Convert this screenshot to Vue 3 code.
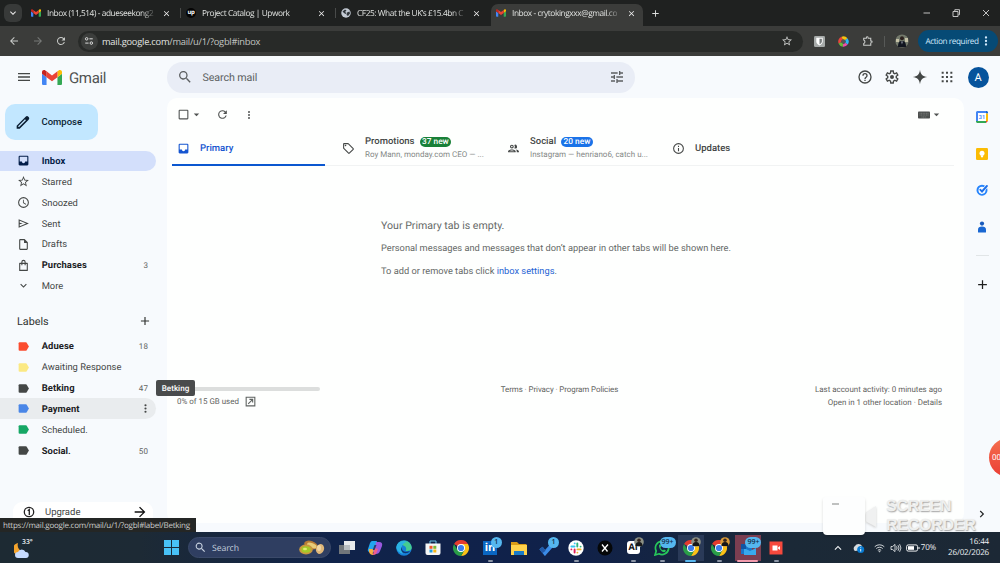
<template>
  <div class="screen">
    <!-- shared logos -->
    <svg class="defs" aria-hidden="true">
      <symbol id="gmail" viewBox="52 42 88 66">
        <path fill="#4285f4" d="M58 108h14V74L52 59v43c0 3.32 2.69 6 6 6" />
        <path fill="#34a853" d="M120 108h14c3.32 0 6-2.69 6-6V59l-20 15" />
        <path fill="#fbbc04" d="M120 48v26l20-15v-8c0-7.42-8.47-11.65-14.4-7.2" />
        <path fill="#ea4335" d="M72 74V48l24 18 24-18v26L96 92" />
        <path fill="#c5221f" d="M52 51v8l20 15V48l-5.6-4.2c-5.94-4.45-14.4-.22-14.4 7.2" />
      </symbol>
      <symbol id="chrome" viewBox="0 0 48 48">
        <path fill="#e33b2e" d="M24 24 3.2 12A24 24 0 0 1 44.8 12H24z" />
        <path fill="#fbc116" d="M24 12h20.8A24 24 0 0 1 24 48l10.4-18z" />
        <path fill="#2a9d48" d="M3.2 12A24 24 0 0 0 24 48l10.4-18L24 34 13.6 30z" />
        <circle cx="24" cy="24" r="12" fill="#fff" />
        <circle cx="24" cy="24" r="9.3" fill="#3b7ded" />
      </symbol>
    </svg>

    <header class="tabstrip">
      <button class="tab-search"><Glyph name="chevronDown" :size="12" /></button>
      <div v-for="tab in browserTabs" :key="tab.title" class="tab" :class="[tab.kind, { active: tab.active }]">
        <svg v-if="tab.icon === 'gmail'" class="favicon gm"><use href="#gmail" /></svg>
        <span v-else-if="tab.icon === 'up'" class="favicon up">up</span>
        <svg v-else class="favicon" viewBox="0 0 20 20">
          <circle cx="10" cy="10" r="9.5" fill="#c3cad3" />
          <path fill="#30363a" d="M3 7 8 3l3 2-3 3 3 2-2 2-3-2zM12 9l5-2 1 4-4 5-3-2z" />
        </svg>
        <span class="tab-title">{{ tab.title }}</span>
        <Glyph name="close" :size="9" class="tab-close" />
      </div>
      <Glyph name="plus" :size="11" class="new-tab" />
      <div class="window-buttons">
        <svg viewBox="0 0 10 10"><path d="M1.5 5h6.500" /></svg>
        <svg viewBox="0 0 10 10"><path d="M2 3.500h5v5H2zM3.800 3V1.700h4.700v5H7.400" /></svg>
        <svg viewBox="0 0 10 10"><path d="m2 2 6 6M8 2 2 8" /></svg>
      </div>
    </header>

    <div class="toolbar">
      <Glyph name="back" :size="12" />
      <Glyph name="forward" :size="12" class="dim" />
      <Glyph name="reload" :size="12" />
      <div class="address">
        <span class="site-info">
          <svg viewBox="0 0 12 12"><circle cx="3.2" cy="3.4" r="1.5" /><path d="M6.5 3.4h4M1.5 8.5h4" /><circle cx="8.8" cy="8.5" r="1.5" /></svg>
        </span>
        <span class="url">mail.google.com<i>/mail/u/1/?ogbl#inbox</i></span>
        <Glyph name="star" :size="12" />
      </div>
      <div class="extensions">
        <svg viewBox="0 0 12 12"><rect width="12" height="12" rx="1.5" fill="#a6aaa9" /><path fill="#fff" d="M2.500 2h7v4c0 2-1.500 3.300-3.500 4.300C4 9.300 2.500 8 2.500 6z" /><path fill="#777c7c" d="M6 3h2.600v3c0 1.300-1 2.300-2.600 3z" /></svg>
        <svg viewBox="0 0 12 12" class="wheel"><g fill="none" stroke-width="3.400"><path stroke="#e8453c" d="M2.200 7.500A4 4 0 0 1 4.500 2.300" /><path stroke="#f4c20d" d="M4.500 2.300A4 4 0 0 1 9 3.500" /><path stroke="#29b6f6" d="M9 3.500A4 4 0 0 1 9.200 8.400" /><path stroke="#ec4fa5" d="M9.200 8.400A4 4 0 0 1 5.400 10" /><path stroke="#66bb3a" d="M5.400 10A4 4 0 0 1 2.200 7.500" /></g><circle cx="6" cy="6" r="2.300" fill="#555" /></svg>
        <Glyph name="puzzle" :size="13" />
      </div>
      <span class="bar-divider"></span>
      <svg class="profile" viewBox="0 0 14 14"><circle cx="7" cy="7" r="6.600" fill="#73796b" /><path fill="#c5c1a6" d="M1 5h3v3H1zm9-1h3v4h-3z" /><circle cx="7" cy="4.300" r="2" fill="#2c211e" /><path fill="#11151f" d="M3 13c0-5 1.500-6 4-6s4 1 4 6z" /><path fill="#d6dbe6" d="m6.400 7.500.6 3 .6-3z" /></svg>
      <div class="action"><span>Action required</span><Glyph name="dots" :size="14" /></div>
    </div>

    <div class="gmail">
      <div class="topbar">
        <Glyph name="menu" :size="16" class="burger" />
        <svg class="logo"><use href="#gmail" /></svg>
        <span class="wordmark">Gmail</span>
        <div class="search">
          <Glyph name="search" :size="16" />
          <span>Search mail</span>
          <Glyph name="tune" :size="16" />
        </div>
        <div class="top-actions">
          <Glyph name="help" :size="16" />
          <Glyph name="settings" :size="16" />
          <Glyph name="spark" :size="16" />
          <Glyph name="apps" :size="16" />
          <span class="account">A</span>
        </div>
      </div>

      <aside class="sidebar">
        <button class="compose"><Glyph name="pencil" :size="16" /><span>Compose</span></button>
        <ul class="nav">
          <li v-for="item in folders" :key="item.name" :class="{ current: item.current, bold: item.bold }">
            <Glyph :name="item.icon" :size="13" />
            <span>{{ item.name }}</span>
            <em v-if="item.count">{{ item.count }}</em>
          </li>
        </ul>
        <div class="labels-head"><span>Labels</span><Glyph name="plus" :size="14" /></div>
        <ul class="nav">
          <li v-for="label in labels" :key="label.name" :class="{ bold: label.bold, hovered: label.hovered }">
            <Glyph name="label" :size="13" :style="{ color: label.color }" />
            <span>{{ label.name }}</span>
            <em v-if="label.count">{{ label.count }}</em>
            <Glyph v-if="label.hovered" name="dots" :size="13" class="row-menu" />
          </li>
        </ul>
        <div class="upgrade">
          <svg class="one" viewBox="0 0 12 12"><circle cx="6" cy="6" r="4.700" /><path d="M4.700 4.700 6.300 3.600V9" /></svg>
          <span>Upgrade</span>
          <Glyph name="forward" :size="16" />
        </div>
      </aside>

      <main class="panel">
        <div class="list-tools">
          <Glyph name="box" :size="13" />
          <Glyph name="caret" :size="13" class="select-caret" />
          <Glyph name="reload" :size="13" class="refresh" />
          <Glyph name="dots" :size="12" />
          <svg class="keyboard" viewBox="0 0 12 8"><rect y=".5" width="12" height="7" rx=".8" /><path d="M1.500 2.300h9M1.500 4h9M3.500 6h5" /></svg>
          <Glyph name="caret" :size="13" />
        </div>
        <div class="categories">
          <div v-for="cat in categories" :key="cat.name" class="category" :class="{ selected: cat.selected }">
            <Glyph :name="cat.icon" :size="13" />
            <div class="cat-text">
              <div class="cat-name">{{ cat.name }}<b v-if="cat.badge" :class="cat.tone">{{ cat.badge }}</b></div>
              <div v-if="cat.preview" class="preview">{{ cat.preview }}</div>
            </div>
          </div>
        </div>
        <div class="empty">
          <p class="lead">Your Primary tab is empty.</p>
          <p>Personal messages and messages that don’t appear in other tabs will be shown here.</p>
          <p class="hint">To add or remove tabs click <a>inbox settings</a>.</p>
        </div>
        <footer class="foot">
          <div class="storage">
            <div class="meter"></div>
            <div class="used"><span>0% of 15 GB used</span><Glyph name="open" :size="13" /></div>
          </div>
          <div class="terms">Terms · Privacy · Program Policies</div>
          <div class="activity">
            <div>Last account activity: 0 minutes ago</div>
            <div class="location">Open in 1 other location · Details</div>
          </div>
        </footer>
      </main>

      <aside class="rail">
        <svg viewBox="0 0 12 12"><path fill="#4285f4" d="M1 0h9v2H2v8H0V1z" /><path fill="#1967d2" d="M10 0h1l1 1v1.500h-2z" /><path fill="#fbbc04" d="M10 2.500h2V10h-2z" /><path fill="#34a853" d="M2 10h8v2H1l-1-1v-1z" /><path fill="#ea4335" d="M10 10h2l-2 2z" /><path fill="#fff" d="M2 2h8v8H2z" /><text x="6" y="8.200" text-anchor="middle">31</text></svg>
        <svg viewBox="0 0 12 12"><rect width="12" height="12" rx="1.200" fill="#fbbc04" /><circle cx="6" cy="5.200" r="2.500" fill="#fff" /><path fill="#fff" d="M4.900 7.300h2.200v2H4.900z" /></svg>
        <svg viewBox="0 0 12 12"><circle cx="6" cy="6.200" r="4.500" fill="none" stroke="#2684fc" stroke-width="2" /><path d="m3.800 5.600 2 2.200 4.800-5.600" fill="none" stroke="#fff" stroke-width="3.200" /><path d="m4.400 5.800 1.600 1.700 4.900-5.500" fill="none" stroke="#1e70ea" stroke-width="1.900" stroke-linecap="round" /></svg>
        <svg viewBox="0 0 12 12"><circle cx="6" cy="2.600" r="2.100" fill="#185abc" /><path fill="#1967d2" d="M2 11V8.500C2 6.500 3.500 5.500 6 5.500s4 1 4 3V11q0 .5-.5.500h-7Q2 11.500 2 11z" /></svg>
        <hr />
        <Glyph name="plus" :size="15" class="add" />
        <Glyph name="chevronRight" :size="14" class="collapse" />
      </aside>

      <div class="tip">Betking</div>
      <div class="status">https://mail.google.com/mail/u/1/?ogbl#label/Betking</div>
      <div class="recorder-name">SCREEN<br />RECORDER</div>
      <svg class="recorder-lens" viewBox="0 0 12 24"><path d="M0 7 11 0v23L0 17z" /></svg>
      <div class="recorder-timer">00</div>
    </div>

    <footer class="taskbar">
      <div class="weather">
        <svg viewBox="0 0 16 15"><path fill="#f5a42d" d="M4 0a6 6 0 1 0 6 9A7 7 0 0 1 4 0z" /><path fill="#c7dbff" d="M4 15a3 3 0 0 1 0-6 4 4 0 0 1 7.500 0A3 3 0 0 1 12 15z" /></svg>
        <span>33°</span>
      </div>
      <div class="start"><i></i><i></i><i></i><i></i></div>
      <div class="task-search">
        <Glyph name="search" :size="13" />
        <span>Search</span>
        <svg class="pistachio" viewBox="0 0 26 15"><ellipse cx="12" cy="5" rx="7" ry="4" fill="#b97c35" transform="rotate(20 12 5)" /><ellipse cx="13" cy="5.500" rx="5" ry="2.400" fill="#e8cc79" transform="rotate(20 13 5)" /><ellipse cx="7" cy="9.500" rx="6.800" ry="5" fill="#c9973f" /><ellipse cx="7" cy="9.500" rx="4.700" ry="3.300" fill="#a4c928" /><ellipse cx="6" cy="9" rx="2" ry="1.300" fill="#e1ed72" /><ellipse cx="21" cy="9" rx="4" ry="5" fill="#e0b779" transform="rotate(20 21 9)" /><ellipse cx="20" cy="8" rx="2" ry="3" fill="#f0d6a5" /></svg>
      </div>
      <div class="apps">
        <div class="app"><svg viewBox="0 0 16 16"><path fill="#71767a" d="M0 5h11v9H0z" /><path fill="#e8eaeb" d="M5 1h11v9H5z" /><path fill="#b8bdc0" d="M5 5h6v5H5z" /></svg></div>
        <div class="app"><svg viewBox="0 0 16 16"><path fill="#22a6ee" d="M5 1h5L7 12H3Q0 12 1 9l2-6Q4 1 5 1z" /><path fill="#9958df" d="M9 2h3q4 0 3 4l-2 5q-1 3-4 3H7z" /><path fill="#f5ad43" d="M2 9h5l-1 3Q5 15 8 15H6Q3 15 2 12z" /><path fill="#ef5e8a" d="m7 8 4 1-2 5q-1 1-3 1z" /><path fill="#273e70" d="m7.500 5 2 0-2 5H5.700z" /></svg></div>
        <div class="app"><svg viewBox="0 0 16 16"><circle cx="8" cy="8" r="7.700" fill="#1681d8" /><path fill="#45cc91" d="M1 5C4-1 14-1 15.700 7c.3 3-2 4-6 4 2-4-2-7-8.700-6z" /><path fill="#2ab2e6" d="M1 5C3 1 8 0 11 2 6 3 4 8 7 14 1 12-1 8 1 5z" /><path fill="#0f3672" d="M6 7c-1 4 3 6 8 4-2 3-7 3-8.500 0C4.700 9 5 8 6 7z" /></svg></div>
        <div class="app"><svg viewBox="0 0 16 16"><path fill="none" stroke="#6cc3e6" d="M5 4V1h6v3" /><path fill="#f4f6f7" d="M.5 3.500h15V13q0 2-2 2h-11q-2 0-2-2z" /><path fill="#ef5228" d="M4.500 5.800h3v3h-3z" /><path fill="#7ab832" d="M8.300 5.800h3v3h-3z" /><path fill="#209fe0" d="M4.500 9.500h3v3h-3z" /><path fill="#f7b718" d="M8.300 9.500h3v3h-3z" /></svg></div>
        <div class="app"><svg><use href="#chrome" /></svg></div>
        <div class="app running"><span class="linkedin">in</span><b class="dot">1</b></div>
        <div class="app"><svg viewBox="0 0 16 16"><path fill="#d99b16" d="M0 2h6l2 2h7.500v10H0z" /><path fill="#ffd24b" d="M0 5h16v10H0z" /><path fill="#1a7bc8" d="M3 11h10v4H3z" /></svg></div>
        <div class="app"><svg viewBox="0 0 16 16"><path d="m2 8 4 5L14 4" fill="none" stroke="#3c8ce8" stroke-width="4" /><path d="m2 8 3 4" stroke="#2259a9" stroke-width="4" /></svg><b class="dot">1</b></div>
        <div class="app running"><svg viewBox="0 0 16 16"><circle cx="8" cy="8" r="7.700" fill="#fff" /><g fill="none" stroke-width="1.900" stroke-linecap="round"><path stroke="#36c5f0" d="M6.700 3.400v0M3.400 6.500h3.200" /><path stroke="#2eb67d" d="M9.300 3.400v3.200M12.600 6.600v0" /><path stroke="#ecb22e" d="M9.400 9.400h3.200M9.400 12.600v0" /><path stroke="#e01e5a" d="M6.600 9.400v3.200M3.400 9.400v0" /></g></svg></div>
        <div class="app"><svg viewBox="0 0 16 16"><circle cx="8" cy="8" r="7.500" fill="#050708" /><path d="m5 4.500 5.500 7M11 4.500l-6 7" stroke="#fff" stroke-width="1.300" /></svg></div>
        <div class="app running"><span class="ai">AI</span><Face /></div>
        <div class="app running"><svg viewBox="0 0 16 16"><path d="M1 15 2.200 11A6.600 6.600 0 1 1 5 13.800z" fill="none" stroke="#27c65b" stroke-width="1.700" /><path fill="#27c65b" d="M5.200 4.500 7 5v2l-.7.700q1 2 2.700 2.500l1-.7 2 1-1 1.500C8 13 4 8 5.200 4.500z" /></svg><b class="many">99+</b></div>
        <div class="app running focused"><svg><use href="#chrome" /></svg><Face /></div>
        <div class="app running"><svg><use href="#chrome" /></svg><Face warm /></div>
        <div class="app running alert"><svg viewBox="0 0 16 16"><path fill="#1976c9" d="M1 4h11v10H1z" /><path fill="#38a9ec" d="m4 8 6 3 6-3v7H4z" /><path fill="#1055a4" d="M1 4h5v5H1z" /></svg><b class="many">99+</b></div>
        <div class="app running"><svg viewBox="0 0 16 16"><rect x="1.500" y="1.500" width="13" height="13" fill="#f5493d" /><path fill="#fff" d="M4.500 5.500h5v5h-5zM10 7.500l2-1.500v4l-2-1.500z" /></svg></div>
      </div>
      <div class="tray">
        <Glyph name="chevronUp" :size="14" />
        <svg class="cloud" viewBox="0 0 13 12"><path fill="#d5dce1" d="M3 9a3 3 0 0 1 0-5 4 4 0 0 1 7 0v4z" /><circle cx="8.700" cy="7.500" r="3.500" fill="#087bd2" /><path stroke="#fff" stroke-width=".9" d="M8.700 5.300v.9M8.700 7v2.500" /></svg>
        <svg class="wifi" viewBox="0 0 12 10"><path d="M.8 3.600a7.500 7.500 0 0 1 10.400 0M2.500 5.600a5 5 0 0 1 7 0M4.200 7.500a2.600 2.600 0 0 1 3.600 0" /><circle cx="6" cy="8.700" r=".5" /></svg>
        <svg class="volume" viewBox="0 0 12 10"><path d="M1 3.500h1.600L5 1.400v7.200L2.600 6.500H1zM6.500 3.300q1.200 1.700 0 3.400M8 2.200q2 2.800 0 5.600M9.600 1.200q2.700 3.800 0 7.600" /></svg>
        <svg class="battery" viewBox="0 0 14 8"><rect x=".6" y=".9" width="11" height="6.200" rx="1.600" fill="none" stroke="#fff" stroke-width=".9" /><rect x="2" y="2.200" width="6" height="3.600" fill="#fff" /><path stroke="#fff" d="M13 3v2" /></svg>
        <span class="percent">70%</span>
        <div class="clock"><div>16:44</div><div>26/02/2026</div></div>
      </div>
      <div class="recorder-card"></div>
    </footer>
  </div>
</template>

<script setup>
import { h } from 'vue'

const paths = {
  chevronDown: 'M7.400 8.600 12 13.200l4.600-4.600L18 10l-6 6-6-6z',
  chevronUp: 'm12 8 6 6-1.400 1.400L12 10.800l-4.600 4.600L6 14z',
  chevronRight: 'M9.700 6 15.700 12l-6 6-1.500-1.500 4.500-4.500-4.500-4.500z',
  close: 'M19 6.400 17.600 5 12 10.600 6.400 5 5 6.400l5.600 5.600L5 17.600 6.400 19l5.600-5.600 5.600 5.600 1.400-1.400-5.600-5.600z',
  plus: 'M19 13h-6v6h-2v-6H5v-2h6V5h2v6h6z',
  back: 'M20 11H7.800l5.600-5.600L12 4l-8 8 8 8 1.400-1.400L7.800 13H20z',
  forward: 'm12 4-1.400 1.400 5.600 5.600H4v2h12.200l-5.600 5.600L12 20l8-8z',
  reload: 'M17.650 6.350A8 8 0 1 0 19.730 14h-2.080A6 6 0 1 1 12 6c1.660 0 3.140.69 4.220 1.780L13 11h7V4z',
  star: 'm22 9.240-7.190-.62L12 2 9.190 8.630 2 9.240l5.460 4.730L5.820 21 12 17.270 18.180 21l-1.630-7.030zM12 15.400l-3.760 2.270 1-4.280-3.320-2.880 4.380-.38L12 6.100l1.710 4.040 4.380.38-3.320 2.880 1 4.280z',
  puzzle: 'M4 5h5a2.500 2.500 0 0 1 5 0h5v5a2.500 2.500 0 0 1 0 5v5H4v-5c3 0 3-5 0-5zM6 7v1.700c3 1.500 3 6.100 0 7.600V18h11v-4h1.500a1 1 0 0 0 0-2H17V7h-4.500V5a.8.8 0 0 0-1.600 0v2z',
  dots: 'M12 8a2 2 0 1 0 0-4 2 2 0 0 0 0 4m0 2a2 2 0 1 0 0 4 2 2 0 0 0 0-4m0 6a2 2 0 1 0 0 4 2 2 0 0 0 0-4',
  menu: 'M3 18h18v-2H3zm0-5h18v-2H3zm0-7v2h18V6z',
  search: 'M15.500 14h-.79l-.28-.27A6.500 6.500 0 1 0 13.730 14.430l.27.28v.79l5 4.990L20.490 19zm-6 0a4.500 4.500 0 1 1 0-9 4.500 4.500 0 0 1 0 9',
  tune: 'M3 17v2h6v-2zM3 5v2h10V5zm10 16v-2h8v-2h-8v-2h-2v6zM7 9v2H3v2h4v2h2V9zm14 4v-2H11v2zm-6-4h2V7h4V5h-4V3h-2z',
  help: 'M11 18h2v-2h-2zm1-16a10 10 0 1 0 0 20 10 10 0 0 0 0-20m0 18a8 8 0 1 1 0-16 8 8 0 0 1 0 16m0-14a4 4 0 0 0-4 4h2a2 2 0 1 1 4 0c0 2-3 1.750-3 5h2c0-2.250 3-2.500 3-5a4 4 0 0 0-4-4',
  settings: 'm9.250 22-.4-3.200q-.33-.12-.61-.3t-.56-.38l-2.980 1.250-2.750-4.750 2.580-1.950a4.700 4.700 0 0 1 0-1.350L1.950 9.380 4.700 4.630l2.980 1.250q.27-.2.570-.38t.6-.3l.4-3.200h5.500l.4 3.200q.33.12.61.3t.56.38l2.980-1.250 2.750 4.750-2.580 1.950a4.700 4.700 0 0 1 0 1.350l2.580 1.940-2.750 4.750-2.980-1.250q-.27.2-.57.380t-.6.3l-.4 3.200zM11 20h1.980l.35-2.650a5.500 5.500 0 0 0 2.620-1.520l2.480 1.020.97-1.700-2.150-1.630a5.800 5.800 0 0 0 0-3.050l2.150-1.620-.97-1.700-2.480 1.050a5.500 5.500 0 0 0-2.630-1.550L13 4h-1.980l-.35 2.650a5.500 5.500 0 0 0-2.620 1.520L5.570 7.150l-.97 1.700 2.150 1.600a5.800 5.800 0 0 0 0 3.070L4.600 15.150l.97 1.700 2.480-1.050a5.500 5.500 0 0 0 2.620 1.550zM12 9a3 3 0 1 0 0 6 3 3 0 0 0 0-6',
  spark: 'M12 1c.9 7 4 10.200 11 11-7 .8-10.100 4-11 11-.9-7-4-10.200-11-11 7-.8 10.100-4 11-11',
  apps: 'M4 4h3v3H4zm6.500 0h3v3h-3zM17 4h3v3h-3zM4 10.500h3v3H4zm6.500 0h3v3h-3zm6.500 0h3v3h-3zM4 17h3v3H4zm6.500 0h3v3h-3zm6.500 0h3v3h-3z',
  pencil: 'M2.500 17.500V22H7L20.500 8.500q2-2 0-4l-.5-.5q-2-2-4 0zM15 7.800l1.400 1.400L6.200 19.500H5V18z',
  inbox: 'M19 3H5a2 2 0 0 0-2 2v14c0 1.100.9 2 2 2h14a2 2 0 0 0 2-2V5a2 2 0 0 0-2-2m0 11h-4a3 3 0 0 1-6 0H5V5h14z',
  clock: 'M12 2a10 10 0 1 0 0 20 10 10 0 0 0 0-20m0 18a8 8 0 1 1 0-16 8 8 0 0 1 0 16m.5-13H11v6l5.200 3.200.8-1.300-4.500-2.700z',
  send: 'M3 20V4l19 8zm2-3 11.900-5L5 7v3.500l6 1.500-6 1.500z',
  draft: 'M14 2H6a2 2 0 0 0-2 2v16c0 1.100.9 2 2 2h12a2 2 0 0 0 2-2V8zM6 20V4h7v5h5v11z',
  bag: 'M19 7h-3V5.500a4 4 0 0 0-8 0V7H5a1 1 0 0 0-1 1v13a1 1 0 0 0 1 1h14a1 1 0 0 0 1-1V8a1 1 0 0 0-1-1m-9-1.500a2 2 0 0 1 4 0V7h-4zM18 20H6V9h2v2.500h2V9h4v2.500h2V9h2z',
  label: 'M3 6q0-2 2-2h11q1 0 1.600.8L22 12l-4.400 7.200Q17 20 16 20H5q-2 0-2-2z',
  box: 'M19 5v14H5V5zm0-2H5a2 2 0 0 0-2 2v14c0 1.100.9 2 2 2h14a2 2 0 0 0 2-2V5a2 2 0 0 0-2-2',
  caret: 'm7 10 5 5 5-5z',
  tag: 'm21.400 14.200-7.200 7.200a2 2 0 0 1-2.800 0L2.600 12.600A2 2 0 0 1 2 11.200V4c0-1.100.9-2 2-2h7.200q.8 0 1.400.6l8.800 8.800a2 2 0 0 1 0 2.800M12.800 20l7.200-7.200L11.200 4H4v7.200zM6.500 5a1.500 1.500 0 1 0 0 3 1.500 1.500 0 0 0 0-3',
  people: 'M9 13.750c-2.340 0-7 1.170-7 3.500V19h14v-1.750c0-2.330-4.660-3.500-7-3.500M4.340 17c.84-.58 2.870-1.250 4.660-1.250s3.820.67 4.660 1.250zM9 12a3.500 3.500 0 1 0 0-7 3.500 3.500 0 0 0 0 7m0-5a1.500 1.500 0 1 1 0 3 1.500 1.500 0 0 1 0-3m7.040 6.810c1.160.84 1.960 1.960 1.960 3.440V19h4v-1.750c0-2.020-3.500-3.170-5.960-3.440M15 12a3.500 3.500 0 1 0-1.500-6.660 5.500 5.500 0 0 1 0 6.320c.45.22.96.34 1.500.34',
  info: 'M11 7h2v2h-2zm0 4h2v6h-2zm1-9a10 10 0 1 0 0 20 10 10 0 0 0 0-20m0 18a8 8 0 1 1 0-16 8 8 0 0 1 0 16',
  open: 'M3 3h18v18H3zm2 2v14h14V5zm5 2h7v7h-2v-3.600L8.400 17 7 15.600 13.600 9H10z',
}

const Glyph = ({ name, size }) =>
  h('svg', { viewBox: '0 0 24 24', width: size, height: size, fill: 'currentColor', style: { flex: 'none' } }, [
    h('path', { d: paths[name], 'fill-rule': 'evenodd' }),
  ])
Glyph.props = ['name', 'size']

// little profile portrait in the corner of a taskbar icon
const Face = ({ warm }) =>
  h('svg', { class: 'face', viewBox: '0 0 10 10' }, [
    h('circle', { cx: 5, cy: 5, r: 4.8, fill: warm === '' ? '#d99b39' : '#8d9185' }),
    h('path', { d: 'M1.500 9q0-4 3.500-4t3.500 4z', fill: '#161718' }),
    h('circle', { cx: 5, cy: 3.2, r: 1.8, fill: '#34251f' }),
  ])
Face.props = ['warm']

const browserTabs = [
  { title: 'Inbox (11,514) - adueseekong2', icon: 'gmail', kind: 'first' },
  { title: 'Project Catalog | Upwork', icon: 'up', kind: 'second' },
  { title: 'CF25: What the UK’s £15.4bn C', icon: 'globe', kind: 'third' },
  { title: 'Inbox - crytokingxxx@gmail.co', icon: 'gmail', kind: 'fourth', active: true },
]

const folders = [
  { name: 'Inbox', icon: 'inbox', current: true, bold: true },
  { name: 'Starred', icon: 'star' },
  { name: 'Snoozed', icon: 'clock' },
  { name: 'Sent', icon: 'send' },
  { name: 'Drafts', icon: 'draft' },
  { name: 'Purchases', icon: 'bag', count: 3, bold: true },
  { name: 'More', icon: 'chevronDown' },
]

const labels = [
  { name: 'Aduese', color: '#fb4c2f', count: 18, bold: true },
  { name: 'Awaiting Response', color: '#fbe983' },
  { name: 'Betking', color: '#444746', count: 47, bold: true },
  { name: 'Payment', color: '#4986e7', bold: true, hovered: true },
  { name: 'Scheduled.', color: '#16a765' },
  { name: 'Social.', color: '#444746', count: 50, bold: true },
]

const categories = [
  { name: 'Primary', icon: 'inbox', selected: true },
  { name: 'Promotions', icon: 'tag', badge: '37 new', tone: 'green', preview: 'Roy Mann, monday.com CEO — ...' },
  { name: 'Social', icon: 'people', badge: '20 new', tone: 'blue', preview: 'Instagram — henriano6, catch u...' },
  { name: 'Updates', icon: 'info' },
]
</script>

<style>
body {
  overflow: hidden;
}
</style>

<style scoped>
.screen {
  width: 1000px;
  height: 563px;
  display: grid;
  grid-template-rows: 26px 30px 476px 31px;
  font-family: Roboto, "Liberation Sans", sans-serif;
  text-rendering: geometricPrecision;
  color: #444746;
  overflow: hidden;
}
.screen * {
  box-sizing: border-box;
}
.defs {
  position: absolute;
  width: 0;
  height: 0;
}
button {
  border: 0;
  padding: 0;
  font: inherit;
}

/* browser chrome */
.tabstrip {
  background: #1f2120;
  color: #dfe1df;
  display: flex;
  align-items: center;
  font-family: "Open Sans", "Noto Sans", sans-serif;
  font-size: 8.3px;
  letter-spacing: -0.41px;
}
.tab-search {
  width: 18px;
  height: 18px;
  margin: 0 3px 0 4px;
  border-radius: 6px;
  background: #383a39;
  color: #e8e8e8;
  display: grid;
  place-items: center;
}
.tab {
  width: 155px;
  height: 22px;
  align-self: flex-end;
  display: flex;
  align-items: center;
  padding: 0 9px 4px 6px;
}
.tab.active {
  width: 152px;
  padding-right: 7px;
  padding-left: 5px;
  background: #3b3c3a;
  border-radius: 7px 7px 0 0;
  margin-left: 1px;
}
.tab.second,
.tab.third {
  background: linear-gradient(#494b4a, #494b4a) 0 4px / 1px 10px no-repeat;
}
.favicon {
  width: 10px;
  height: 10px;
  flex: none;
  margin-right: 6px;
}
.favicon.gm {
  height: 8px;
}
.favicon.up {
  border-radius: 50%;
  background: #050505;
  color: #fff;
  font-weight: 700;
  font-size: 6px;
  line-height: 9px;
  text-align: center;
}
.tab-title {
  width: 110px;
  white-space: nowrap;
  mask-image: linear-gradient(90deg, #000 86%, transparent);
}
.tab-close {
  margin-left: auto;
  color: #f1f1f1;
}
.new-tab {
  margin-left: 7px;
}
.window-buttons {
  margin-left: auto;
  display: flex;
  gap: 19.5px;
  padding-right: 11px;
}
.window-buttons svg {
  width: 10px;
  height: 10px;
  fill: none;
  stroke: #d4d4d4;
  stroke-width: 0.9;
}
.toolbar {
  background: #3b3c3a;
  color: #c9cbc9;
  display: flex;
  align-items: center;
  padding: 0 4px 0 8px;
  gap: 11.5px;
}
.dim {
  color: #777977;
}
.address {
  width: 725px;
  height: 21px;
  margin-left: -1px;
  border-radius: 11px;
  background: #282a28;
  display: flex;
  align-items: center;
  padding: 0 10px 0 3px;
}
.address .url {
  flex: 1;
}
.site-info {
  width: 17px;
  height: 17px;
  border-radius: 50%;
  background: #3c3e3c;
  margin-right: 4.5px;
  display: grid;
  place-items: center;
}
.site-info svg {
  width: 10px;
  fill: none;
  stroke: #dedede;
  stroke-width: 1.2;
}
.url {
  font: 9.3px "Open Sans", "Noto Sans", sans-serif;
  letter-spacing: -0.24px;
  color: #e4e6e4;
}
.url i {
  font-style: normal;
  color: #c4c7c4;
}
.extensions {
  display: flex;
  align-items: center;
  gap: 12.5px;
}
.extensions svg {
  width: 11px;
  height: 11px;
}
.extensions svg:last-child {
  width: 13px;
  height: 13px;
}
.bar-divider {
  width: 1px;
  height: 11px;
  background: #575957;
  margin-left: -2px;
}
.profile {
  width: 14px;
  height: 14px;
  margin: 0 -3px 0 -1px;
}
.action {
  width: 80px;
  height: 22px;
  border-radius: 11px;
  background: #064a75;
  color: #cfe8fb;
  font: 8.2px "Open Sans", "Noto Sans", sans-serif;
  letter-spacing: -0.4px;
  display: flex;
  align-items: center;
  justify-content: space-between;
  padding: 0 5px 0 8px;
  white-space: nowrap;
}

/* gmail */
.gmail {
  position: relative;
  background: #f7fafd;
  display: grid;
  grid-template: 42px 1fr / 167px 797px 36px;
  overflow: hidden;
}
.topbar {
  grid-column: 1 / -1;
  display: flex;
  align-items: center;
  padding: 0 11.5px 0 15.5px;
}
.logo {
  width: 20px;
  height: 15px;
  margin: 1px 7px 0 10.5px;
}
.wordmark {
  width: 98px;
  font-size: 15px;
  letter-spacing: -0.35px;
  color: #505352;
  padding-top: 1px;
}
.search {
  width: 468px;
  height: 31px;
  border-radius: 16px;
  background: #e9edf6;
  display: flex;
  align-items: center;
  padding: 0 10px;
  font-size: 10.7px;
  letter-spacing: -0.1px;
  color: #5c5f61;
}
.search span {
  flex: 1;
  padding-left: 9.5px;
}
.top-actions {
  margin-left: auto;
  display: flex;
  align-items: center;
  gap: 11.5px;
}
.account {
  width: 21px;
  height: 21px;
  border-radius: 50%;
  background: #06539c;
  color: #fff;
  font-size: 11px;
  line-height: 21px;
  text-align: center;
  margin-left: 1px;
}
.sidebar {
  padding-top: 6px;
  overflow: hidden;
}
.compose {
  width: 93px;
  height: 36px;
  margin-left: 5px;
  border-radius: 10px;
  background: #c2e7ff;
  color: #0b1f33;
  display: flex;
  align-items: center;
  gap: 10.5px;
  padding-left: 10px;
  font-size: 9.5px;
  font-weight: 500;
}
.compose span {
  margin-top: -1px;
}
.nav {
  list-style: none;
  margin: 10.5px 11px 0 0;
  padding: 0;
}
.nav li {
  height: 20.85px;
  display: flex;
  align-items: center;
  padding: 0 8px 0 17px;
  border-radius: 0 11px 11px 0;
  font-size: 9.4px;
}
.nav li span {
  flex: 1;
  padding: 1.2px 0 0 11.7px;
}
.nav em {
  font-style: normal;
  font-size: 8px;
  font-weight: 400;
  color: #5f6361;
  padding-top: 1px;
}
.nav .bold {
  font-weight: 700;
  letter-spacing: 0.08px;
  color: #202124;
}
.nav .bold svg {
  color: #444746;
}
.nav .current,
.nav .current svg {
  color: #041e49;
}
.nav .current {
  background: #d3dffb;
}
.nav .hovered {
  background: #e9ecee;
}
.nav .row-menu {
  margin-right: -4px;
}
.labels-head {
  height: 20px;
  margin: 15px 15.5px 0 17px;
  display: flex;
  align-items: center;
  justify-content: space-between;
  font-size: 10.8px;
  color: #303331;
}
.labels-head + .nav {
  margin-top: 4.5px;
}
.upgrade {
  width: 140px;
  height: 30px;
  margin: 41px 0 0 13px;
  border-radius: 9px;
  background: #fff;
  display: flex;
  align-items: flex-start;
  padding: 2.5px 5px 0 10px;
  font-size: 9.5px;
  line-height: 17px;
}
.upgrade span {
  flex: 1;
  padding-left: 10px;
}
.upgrade > svg:last-child {
  color: #111;
}
.one {
  width: 12px;
  height: 12px;
  margin-top: 2px;
  fill: none;
  stroke: #222;
  stroke-width: 1.3;
}
.panel {
  height: 425px;
  border-radius: 10px;
  background: #fefffe;
  padding-left: 5px;
  padding-right: 10px;
}
.list-tools {
  height: 33px;
  display: flex;
  align-items: center;
  padding: 0 11px 0 5px;
  color: #505352;
}
.refresh {
  margin: 0 13.5px 0 13px;
}
.keyboard {
  width: 12px;
  height: 8px;
  margin: 0 0 0 auto;
  fill: #4c4f4e;
}
.keyboard path {
  stroke: #8b8e8c;
  stroke-width: 0.7;
  stroke-dasharray: 1 0.6;
}
.categories {
  height: 35px;
  display: flex;
  border-bottom: 1px solid #f1f3f3;
}
.category {
  width: 165px;
  height: 35px;
  display: flex;
  align-items: center;
  padding-left: 5px;
}
.category:first-child svg,
.selected {
  color: #1555d0;
}
.selected {
  background: linear-gradient(#0b57d0, #0b57d0) 0 100% / 153px 2px no-repeat;
}
.cat-text {
  padding-left: 10px;
  white-space: nowrap;
}
.cat-name {
  font-size: 9.5px;
  font-weight: 500;
  line-height: 12px;
  display: flex;
  align-items: center;
}
.cat-name b {
  height: 10px;
  line-height: 10px;
  border-radius: 5px;
  padding: 0 2.5px;
  margin-left: 5px;
  color: #fff;
  font-size: 8.3px;
  font-weight: 500;
}
.green { background: #188038; }
.blue { background: #1a73e8; }
.preview {
  font-size: 8px;
  line-height: 13px;
  color: #858987;
}
.empty {
  padding: 52px 0 0 209px;
  height: 217px;
  color: #656967;
  font-size: 9.27px;
  white-space: nowrap;
}
.empty p {
  margin: 0;
  height: 23px;
  line-height: 15px;
}
.empty .lead {
  font-size: 10.6px;
}
.empty a {
  color: #1f63d4;
}
.foot {
  display: grid;
  grid-template-columns: 148px 1fr 148px;
  font-size: 7.95px;
  line-height: 13px;
  color: #5e6260;
  padding: 0 12px 0 5px;
}
.storage {
  padding-top: 4px;
}
.meter {
  width: 143px;
  height: 4px;
  border-radius: 2px;
  background: #dcdedd;
}
.used {
  margin-top: 4px;
  display: flex;
  align-items: center;
  gap: 5px;
}
.terms {
  text-align: center;
  letter-spacing: -0.08px;
}
.activity {
  text-align: right;
  white-space: nowrap;
}
.rail {
  display: flex;
  flex-direction: column;
  align-items: center;
  padding-top: 13px;
}
.rail > svg {
  width: 12px;
  height: 12px;
  margin-bottom: 24.5px;
}
.rail text {
  font-size: 5.5px;
  font-weight: 700;
  fill: #4285f4;
}
.rail hr {
  width: 13px;
  border: 0;
  border-top: 1px solid #e1e5e7;
  margin: -2px 0 21px;
}
.rail .add {
  width: 15px;
  height: 15px;
  color: #1f1f1f;
  margin: 0;
}
.rail .collapse {
  width: 14px;
  height: 14px;
  margin-top: 215px;
  color: #252728;
}
.tip {
  position: absolute;
  left: 156px;
  top: 324px;
  width: 39px;
  height: 16px;
  border-radius: 2px;
  background: #494b4c;
  color: #fff;
  font-size: 8.1px;
  font-weight: 500;
  line-height: 17px;
  text-align: center;
}
.status {
  position: absolute;
  left: 0;
  top: 462px;
  width: 196px;
  height: 14px;
  background: #242625;
  color: #c9cccb;
  font: 8px/15px "Open Sans", "Noto Sans", sans-serif;
  letter-spacing: -0.23px;
  padding-left: 3px;
  white-space: nowrap;
}
.recorder-name {
  position: absolute;
  left: 886px;
  top: 442px;
  font: 700 16px/18.5px "Liberation Sans", sans-serif;
  letter-spacing: -0.25px;
  color: #eeefee;
  text-shadow: 0.7px 0.7px 1.5px #9d9d9d;
}
.recorder-lens {
  position: absolute;
  left: 866px;
  top: 449px;
  width: 11px;
  height: 24px;
  fill: #f0f1f1;
  filter: drop-shadow(0 1px 1px #ccc);
}
.recorder-timer {
  position: absolute;
  left: 989px;
  top: 382px;
  width: 39px;
  height: 39px;
  border-radius: 50%;
  background: linear-gradient(#f5704f, #ea3d34);
  color: #fff;
  font-size: 8px;
  line-height: 39px;
  padding-left: 3px;
}

/* taskbar */
.taskbar {
  position: relative;
  background: linear-gradient(90deg, #1d2a33 0, #1d2a35 140px, #10234a 330px, #10214a 570px, #1b2937 790px, #1c2835);
  color: #f0f3f5;
  display: flex;
  align-items: center;
  font-family: "Open Sans", "Noto Sans", sans-serif;
}
.weather {
  width: 164px;
  height: 22px;
  padding-left: 14px;
  display: flex;
}
.weather svg {
  width: 16px;
  height: 15px;
  margin-top: 6px;
}
.weather span {
  font-size: 6.8px;
  font-weight: 600;
  line-height: 9px;
  margin: 0 0 0 -8px;
}
.start {
  width: 15px;
  height: 15px;
  display: grid;
  grid-template-columns: 7px 7px;
  gap: 1px;
}
.start i {
  background: #48c1f7;
}
.task-search {
  width: 143px;
  height: 21px;
  border-radius: 11px;
  margin-left: 9px;
  background: #2f3e61;
  border: 1px solid #3b4a6a;
  display: flex;
  align-items: center;
  padding: 0 5px;
  font-size: 8.7px;
  letter-spacing: -0.1px;
  color: #c4cedd;
}
.task-search span {
  flex: 1;
  padding-left: 5px;
}
.pistachio {
  width: 26px;
  height: 15px;
}
.apps {
  display: flex;
  margin-left: 1.5px;
}
.app {
  position: relative;
  width: 28.65px;
  height: 28px;
  display: grid;
  place-items: center;
}
.app > svg {
  width: 16px;
  height: 16px;
}
.running::after {
  content: "";
  position: absolute;
  bottom: 0;
  left: 12px;
  width: 5px;
  height: 2px;
  border-radius: 1px;
  background: #8b95a6;
}
.focused,
.alert {
  background: linear-gradient(#2a3a58, #2a3a58) center / 26px 26px no-repeat;
}
.alert {
  background-image: linear-gradient(#7b3e51, #7b3e51);
}
.focused::after {
  left: 9px;
  width: 11px;
  background: #58b7ef;
}
.alert::after {
  left: 4px;
  width: 21px;
  background: #f29aac;
}
.linkedin {
  width: 14px;
  height: 14px;
  background: #0a66c2;
  color: #fff;
  font-weight: 700;
  font-size: 11px;
  line-height: 13px;
  text-align: center;
}
.ai {
  width: 13px;
  height: 13px;
  border-radius: 3px;
  background: #fff;
  color: #111;
  font-size: 9px;
  font-weight: 700;
  line-height: 12px;
  text-align: center;
}
.dot,
.many {
  position: absolute;
  top: 3px;
  left: 15px;
  min-width: 11px;
  height: 11px;
  border-radius: 6px;
  background: #55b7f0;
  color: #122c48;
  font-size: 7px;
  font-weight: 600;
  line-height: 11px;
  text-align: center;
}
.many {
  left: 12px;
  width: 16px;
}
.app > .face {
  position: absolute;
  top: 3px;
  left: 15px;
  width: 10px;
  height: 10px;
}
.tray {
  flex: 1;
  display: flex;
  align-items: center;
  padding: 0 12.5px 0 40px;
  font-size: 8px;
  letter-spacing: -0.15px;
}
.tray svg {
  flex: none;
}
.cloud {
  width: 13px;
  height: 12px;
  margin: 0 9px 0 7px;
}
.wifi {
  width: 11px;
  height: 10px;
  fill: none;
  stroke: #f3f5f6;
  stroke-width: 0.9;
}
.volume {
  width: 12px;
  height: 10px;
  margin: 0 4px 0 5px;
  fill: none;
  stroke: #f3f5f6;
  stroke-width: 0.8;
}
.battery {
  width: 14px;
  height: 8px;
  margin-right: 1px;
}
.clock {
  margin-left: auto;
  text-align: right;
  line-height: 10.5px;
}
.recorder-card {
  position: absolute;
  left: 823px;
  top: -35px;
  width: 42px;
  height: 38px;
  border-radius: 2px 2px 4px 4px;
  background: linear-gradient(#bfc1c0, #bfc1c0) 9px 6px / 7px 2px no-repeat, #fdfefe;
  box-shadow: 0 2px 3px rgba(0, 0, 0, 0.15);
}
</style>
